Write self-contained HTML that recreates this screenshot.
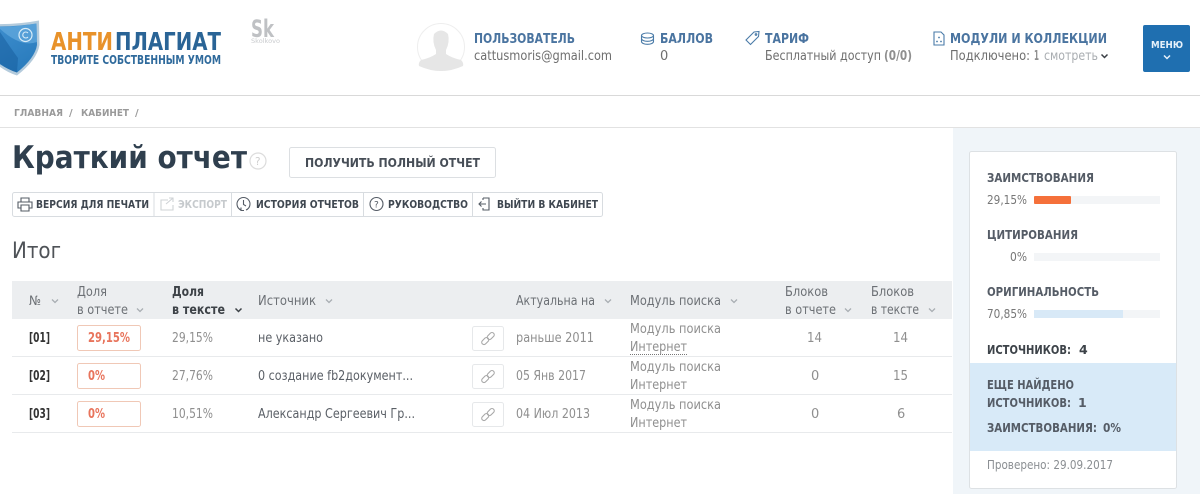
<!DOCTYPE html>
<html lang="ru"><head><meta charset="utf-8"><title>Краткий отчет</title>
<style>
html,body{margin:0;padding:0;background:#fff;width:1200px;height:494px;overflow:hidden}
svg{display:block}
text{font-family:"DejaVu Sans","Liberation Sans",sans-serif;font-size:13px;fill:#6e6e6e}
.b{font-weight:700}
.h{font-weight:700;fill:#4a74a0}
.t{font-weight:700;font-size:11px;fill:#3f4750}
.th{fill:#6c7075;font-size:13px}
.g{fill:#8f8f8f}
.d{fill:#5a5f66}
.p{font-weight:700;font-size:12.5px;fill:#555c66}
.ch{fill:none;stroke:#a9aeb3;stroke-width:1.3}
.ic{fill:none;stroke:#555c66;stroke-width:1.1}
</style></head><body>
<svg width="1200" height="494" viewBox="0 0 1200 494" xmlns="http://www.w3.org/2000/svg">
<defs><linearGradient id="sh" x1="0" y1="0" x2="0.6" y2="1"><stop offset="0" stop-color="#3f8fcf"/><stop offset="1" stop-color="#2a7cbd"/></linearGradient></defs>
<!-- logo -->
<path d="M-10 24Q15 25 39 20.500L39.500 45Q37 60 17 75.500Q5 72 -6 62Z" fill="#b4cbdc"/>
<path d="M-10 26.500Q15 27 36.500 23.500L37 45Q35 58 17 72.500Q6 69 -6 60Z" fill="url(#sh)"/>
<path d="M-2 27Q15 27 36.500 23.500L37 42Q20 48 -2 27Z" fill="#6cb0e2" opacity=".6"/>
<path d="M-2 29Q12 50 18 58L17 72.500Q6 69 -2 62Z" fill="#175f9e" opacity=".55"/>
<circle cx="25.500" cy="35" r="6.500" fill="none" stroke="#d8ecf8" stroke-width="1.200"/>
<path d="M28 33a3 3 0 1 0 0 4" fill="none" stroke="#d8ecf8" stroke-width="1.100"/>
<text x="51" y="50" textLength="62" lengthAdjust="spacingAndGlyphs" class="b" style="font-size:25px;fill:#e8922a">АНТИ</text>
<text x="115" y="50" textLength="106" lengthAdjust="spacingAndGlyphs" class="b" style="font-size:25px;fill:#2a6496">ПЛАГИАТ</text>
<text x="51" y="64" textLength="170" lengthAdjust="spacingAndGlyphs" class="b" style="font-size:12px;fill:#2f6a9c">ТВОРИТЕ СОБСТВЕННЫМ УМОМ</text>
<text x="251" y="37" textLength="23" lengthAdjust="spacingAndGlyphs" class="b" style="font-size:24px;fill:#bfc1c4">Sk</text>
<text x="251" y="43" textLength="29" lengthAdjust="spacingAndGlyphs" style="font-size:6.500px;fill:#c9cbce">Skolkovo</text>
<!-- user -->
<circle cx="441" cy="47" r="23.500" fill="#fff" stroke="#eee" stroke-width="1"/>
<path d="M434 34Q441 27 448 34Q450 42 446 50L446 54Q452 58 461 60Q464 63 463 66Q452 71 441 71Q430 71 419 66Q418 63 421 60Q430 58 436 54L436 50Q432 42 434 34Z" fill="#e6e6e6"/>
<text x="474" y="43" textLength="101" lengthAdjust="spacingAndGlyphs" class="h">ПОЛЬЗОВАТЕЛЬ</text>
<text x="474" y="60" textLength="138" lengthAdjust="spacingAndGlyphs">cattusmoris@gmail.com</text>
<g fill="none" stroke="#4a7ba8" stroke-width="1.100"><ellipse cx="647.500" cy="35.500" rx="6" ry="2.500"/><path d="M641.500 35.500v6c0 1.500 2.500 2.800 6 2.800s6-1.300 6-2.800v-6M641.500 38.500c0 1.500 2.500 2.800 6 2.800s6-1.300 6-2.800"/></g>
<text x="660" y="43" textLength="53" lengthAdjust="spacingAndGlyphs" class="h">БАЛЛОВ</text>
<text x="660" y="60">0</text>
<g fill="none" stroke="#4a7ba8" stroke-width="1.100"><path d="M746 40l8-8 5-.5-.5 5-8 8Z"/><circle cx="756" cy="34.500" r=".8"/></g>
<text x="765" y="43" textLength="44" lengthAdjust="spacingAndGlyphs" class="h">ТАРИФ</text>
<text x="765" y="60" textLength="116" lengthAdjust="spacingAndGlyphs">Бесплатный доступ</text>
<text x="884" y="60" textLength="28" lengthAdjust="spacingAndGlyphs" class="b g">(0/0)</text>
<g fill="none" stroke="#4a7ba8" stroke-width="1.100"><path d="M934 32h7l3 3v10h-10Z"/></g>
<g fill="#4a7ba8"><circle cx="939" cy="37.500" r=".9"/><circle cx="937" cy="41.500" r=".9"/><circle cx="941" cy="41.500" r=".9"/></g>
<text x="950" y="43" textLength="157" lengthAdjust="spacingAndGlyphs" class="h">МОДУЛИ И КОЛЛЕКЦИИ</text>
<text x="950" y="60" textLength="80" lengthAdjust="spacingAndGlyphs">Подключено:</text>
<text x="1034" y="60" textLength="5" lengthAdjust="spacingAndGlyphs" class="b g">1</text>
<text x="1044" y="60" textLength="54" lengthAdjust="spacingAndGlyphs" style="fill:#a9adb1">смотреть</text>
<path d="M1101.500 54.500l3 3 3-3" fill="none" stroke="#3a3f45" stroke-width="1.500"/>
<rect x="1143" y="25" width="47" height="47" rx="2" fill="#1f6fb0"/>
<text x="1151" y="48" textLength="32" lengthAdjust="spacingAndGlyphs" class="b" style="font-size:10px;fill:#e6f1fa">МЕНЮ</text>
<path d="M1164 55.500l3 3 3-3" fill="none" stroke="#e6f1fa" stroke-width="1.500"/>
<rect x="0" y="95" width="1200" height="1" fill="#d9d9d9"/>
<!-- breadcrumb -->
<text x="14" y="116" textLength="49" lengthAdjust="spacingAndGlyphs" class="b" style="font-size:10px;fill:#9a9a9a">ГЛАВНАЯ</text>
<text x="69" y="116" class="b" style="font-size:10px;fill:#9a9a9a">/</text>
<text x="81" y="116" textLength="48" lengthAdjust="spacingAndGlyphs" class="b" style="font-size:10px;fill:#9a9a9a">КАБИНЕТ</text>
<text x="135" y="116" class="b" style="font-size:10px;fill:#9a9a9a">/</text>
<rect x="0" y="127" width="1200" height="1" fill="#e2e2e2"/>
<!-- right panel -->
<rect x="953" y="128" width="247" height="366" fill="#f0f5f9"/>
<!-- title -->
<text x="12" y="168" textLength="235" lengthAdjust="spacingAndGlyphs" class="b" style="font-size:31px;fill:#2f3f4e">Краткий отчет</text>
<circle cx="258" cy="161" r="8" fill="none" stroke="#dcdcdc" stroke-width="1.200"/>
<text x="255" y="165" style="font-size:10.500px;fill:#cfcfcf">?</text>
<rect x="289.500" y="147.500" width="206" height="30" rx="2" fill="#fff" stroke="#dcdfe2"/>
<text x="305" y="167" textLength="175" lengthAdjust="spacingAndGlyphs" class="b" style="font-size:12px;fill:#474e57">ПОЛУЧИТЬ ПОЛНЫЙ ОТЧЕТ</text>
<!-- toolbar -->
<rect x="12.500" y="192.500" width="590" height="24" rx="2" fill="#fff" stroke="#d8dce0"/>
<path d="M154 193v23M231.500 193v23M363.500 193v23M472.500 193v23" stroke="#d8dce0"/>
<g class="ic"><path d="M21 202v-4h8v4M21 208h-3v-6h14v6h-3M21 205h8v6h-8Z"/></g>
<text x="36" y="208" textLength="113" lengthAdjust="spacingAndGlyphs" class="t">ВЕРСИЯ ДЛЯ ПЕЧАТИ</text>
<g fill="none" stroke="#cfd3d6" stroke-width="1.100"><path d="M168 200h-7v10h12v-5M166 204l7-6M169 198h4v4"/></g>
<text x="178" y="208" textLength="49" lengthAdjust="spacingAndGlyphs" class="t" style="fill:#c6cacd">ЭКСПОРТ</text>
<g class="ic"><path d="M241 210a6.500 6.500 0 1 1 5 0M243.500 200v4.500l2.500 1.500M241 207.500v3h3"/></g>
<text x="256" y="208" textLength="103" lengthAdjust="spacingAndGlyphs" class="t">ИСТОРИЯ ОТЧЕТОВ</text>
<circle cx="376.500" cy="204" r="6.500" class="ic"/>
<text x="374" y="207.500" style="font-size:9px;fill:#555c66">?</text>
<text x="388" y="208" textLength="80" lengthAdjust="spacingAndGlyphs" class="t">РУКОВОДСТВО</text>
<g class="ic"><path d="M483 198h6v12h-6v-2M483 200v-2M479 204h7M481.500 201.500l-2.500 2.500 2.500 2.500"/></g>
<text x="497" y="208" textLength="101" lengthAdjust="spacingAndGlyphs" class="t">ВЫЙТИ В КАБИНЕТ</text>
<text x="12" y="258" textLength="49" lengthAdjust="spacingAndGlyphs" style="font-size:22px;fill:#4f5358">Итог</text>
<!-- table -->
<rect x="12" y="281" width="940" height="38" fill="#eceef0"/>
<path d="M12 356.500h940M12 394.500h940M12 432.500h940" stroke="#e8eaec"/>
<text x="29" y="305" textLength="12" lengthAdjust="spacingAndGlyphs" class="th">№</text>
<text x="77" y="296" textLength="30" lengthAdjust="spacingAndGlyphs" class="th">Доля</text>
<text x="77" y="314" textLength="51" lengthAdjust="spacingAndGlyphs" class="th">в отчете</text>
<text x="172" y="296" textLength="32" lengthAdjust="spacingAndGlyphs" class="b" style="fill:#3d4247">Доля</text>
<text x="172" y="314" textLength="53" lengthAdjust="spacingAndGlyphs" class="b" style="fill:#3d4247">в тексте</text>
<text x="258" y="305" textLength="58" lengthAdjust="spacingAndGlyphs" class="th">Источник</text>
<text x="516" y="305" textLength="79" lengthAdjust="spacingAndGlyphs" class="th">Актуальна на</text>
<text x="630" y="305" textLength="91" lengthAdjust="spacingAndGlyphs" class="th">Модуль поиска</text>
<text x="785" y="296" textLength="43" lengthAdjust="spacingAndGlyphs" class="th">Блоков</text>
<text x="785" y="314" textLength="51" lengthAdjust="spacingAndGlyphs" class="th">в отчете</text>
<text x="871" y="296" textLength="43" lengthAdjust="spacingAndGlyphs" class="th">Блоков</text>
<text x="871" y="314" textLength="48" lengthAdjust="spacingAndGlyphs" class="th">в тексте</text>
<g class="ch"><path d="M52 299.500l3 3 3-3M137 308.500l3 3 3-3M326 299.500l3 3 3-3M605 299.500l3 3 3-3M731 299.500l3 3 3-3M845 308.500l3 3 3-3M929 308.500l3 3 3-3"/></g>
<path d="M235.500 308.500l3 3 3-3" fill="none" stroke="#3d4247" stroke-width="1.500"/>
<!-- rows -->
<g>
<text x="29" y="342" textLength="21" lengthAdjust="spacingAndGlyphs" class="b" style="fill:#333">[01]</text>
<rect x="77.500" y="325.500" width="63" height="25" rx="2" fill="#fff" stroke="#f0c8b6"/>
<text x="88" y="342" textLength="42" lengthAdjust="spacingAndGlyphs" class="b" style="fill:#e8745c">29,15%</text>
<text x="172" y="342" textLength="41" lengthAdjust="spacingAndGlyphs" class="g">29,15%</text>
<text x="258" y="342" textLength="65" lengthAdjust="spacingAndGlyphs" class="d">не указано</text>
<text x="516" y="342" textLength="78" lengthAdjust="spacingAndGlyphs" class="g">раньше 2011</text>
<text x="630" y="333" textLength="91" lengthAdjust="spacingAndGlyphs" class="g">Модуль поиска</text>
<text x="630" y="351" textLength="57" lengthAdjust="spacingAndGlyphs" class="g">Интернет</text>
<path d="M630 354.500h58" stroke="#777" stroke-dasharray="1 1"/>
<text x="807" y="342" textLength="15" lengthAdjust="spacingAndGlyphs" class="g">14</text>
<text x="893" y="342" textLength="15" lengthAdjust="spacingAndGlyphs" class="g">14</text>
</g>
<g>
<text x="29" y="380" textLength="21" lengthAdjust="spacingAndGlyphs" class="b" style="fill:#333">[02]</text>
<rect x="77.500" y="363.500" width="63" height="25" rx="2" fill="#fff" stroke="#f0c8b6"/>
<text x="88" y="380" textLength="17" lengthAdjust="spacingAndGlyphs" class="b" style="fill:#e8745c">0%</text>
<text x="172" y="380" textLength="41" lengthAdjust="spacingAndGlyphs" class="g">27,76%</text>
<text x="258" y="380" textLength="155" lengthAdjust="spacingAndGlyphs" class="d">0 создание fb2документ...</text>
<text x="516" y="380" textLength="70" lengthAdjust="spacingAndGlyphs" class="g">05 Янв 2017</text>
<text x="630" y="371" textLength="91" lengthAdjust="spacingAndGlyphs" class="g">Модуль поиска</text>
<text x="630" y="389" textLength="57" lengthAdjust="spacingAndGlyphs" class="g">Интернет</text>
<text x="811" y="380" class="g">0</text>
<text x="893" y="380" textLength="15" lengthAdjust="spacingAndGlyphs" class="g">15</text>
</g>
<g>
<text x="29" y="418" textLength="21" lengthAdjust="spacingAndGlyphs" class="b" style="fill:#333">[03]</text>
<rect x="77.500" y="401.500" width="63" height="25" rx="2" fill="#fff" stroke="#f0c8b6"/>
<text x="88" y="418" textLength="17" lengthAdjust="spacingAndGlyphs" class="b" style="fill:#e8745c">0%</text>
<text x="172" y="418" textLength="41" lengthAdjust="spacingAndGlyphs" class="g">10,51%</text>
<text x="258" y="418" textLength="157" lengthAdjust="spacingAndGlyphs" class="d">Александр Сергеевич Гр...</text>
<text x="516" y="418" textLength="74" lengthAdjust="spacingAndGlyphs" class="g">04 Июл 2013</text>
<text x="630" y="409" textLength="91" lengthAdjust="spacingAndGlyphs" class="g">Модуль поиска</text>
<text x="630" y="427" textLength="57" lengthAdjust="spacingAndGlyphs" class="g">Интернет</text>
<text x="811" y="418" class="g">0</text>
<text x="897" y="418" class="g">6</text>
</g>
<!-- link buttons -->
<defs><g id="lnk"><rect x=".5" y=".5" width="31" height="24" rx="2" fill="#fff" stroke="#e6e8ea"/><g fill="none" stroke="#a8a8a8" stroke-width="1.100"><rect x="16.500" y="6" width="4.500" height="8" rx="2.200" transform="rotate(45 18.700 10)"/><rect x="11" y="11" width="4.500" height="8" rx="2.200" transform="rotate(45 13.200 15)"/></g></g></defs>
<use href="#lnk" x="472" y="326"/><use href="#lnk" x="472" y="364"/><use href="#lnk" x="472" y="402"/>
<!-- card -->
<rect x="969.500" y="151.500" width="207" height="337" rx="2" fill="#fff" stroke="#dde1e4"/>
<text x="987" y="182" textLength="107" lengthAdjust="spacingAndGlyphs" class="p">ЗАИМСТВОВАНИЯ</text>
<text x="987" y="204" textLength="40" lengthAdjust="spacingAndGlyphs" style="font-size:12.500px;fill:#777">29,15%</text>
<rect x="1034" y="196" width="126" height="8" fill="#f3f5f7"/>
<rect x="1034" y="196" width="37" height="8" rx="1" fill="#f5703a"/>
<text x="987" y="239" textLength="91" lengthAdjust="spacingAndGlyphs" class="p">ЦИТИРОВАНИЯ</text>
<text x="1010" y="261" textLength="17" lengthAdjust="spacingAndGlyphs" style="font-size:12.500px;fill:#777">0%</text>
<rect x="1034" y="253" width="126" height="8" fill="#f3f5f7"/>
<text x="987" y="296" textLength="112" lengthAdjust="spacingAndGlyphs" class="p">ОРИГИНАЛЬНОСТЬ</text>
<text x="987" y="318" textLength="40" lengthAdjust="spacingAndGlyphs" style="font-size:12.500px;fill:#777">70,85%</text>
<rect x="1034" y="310" width="126" height="8" fill="#f3f5f7"/>
<rect x="1034" y="310" width="89" height="8" fill="#d8e9f7"/>
<text x="987" y="354" textLength="84" lengthAdjust="spacingAndGlyphs" class="p" style="fill:#3d4349">ИСТОЧНИКОВ:</text>
<text x="1079" y="354" class="p" style="fill:#3d4349">4</text>
<rect x="970" y="363" width="206" height="88" fill="#d8eaf8"/>
<text x="987" y="389" textLength="87" lengthAdjust="spacingAndGlyphs" class="p">ЕЩЕ НАЙДЕНО</text>
<text x="987" y="407" textLength="84" lengthAdjust="spacingAndGlyphs" class="p">ИСТОЧНИКОВ:</text>
<text x="1078" y="407" class="p">1</text>
<text x="987" y="432" textLength="110" lengthAdjust="spacingAndGlyphs" class="p">ЗАИМСТВОВАНИЯ:</text>
<text x="1103" y="432" textLength="18" lengthAdjust="spacingAndGlyphs" class="p">0%</text>
<text x="987" y="469" textLength="126" lengthAdjust="spacingAndGlyphs" style="font-size:12px;fill:#8a8e92">Проверено: 29.09.2017</text>
</svg>
</body></html>
